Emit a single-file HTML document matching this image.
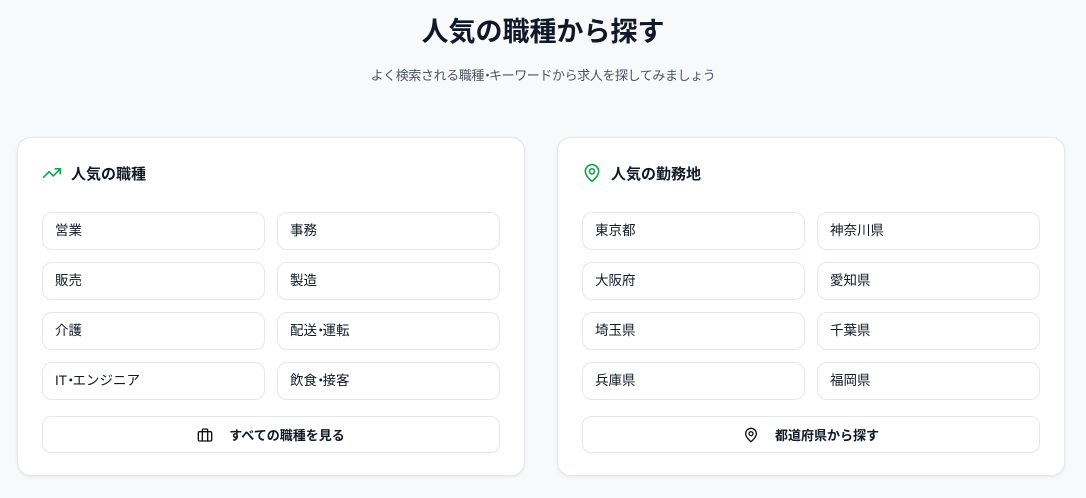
<!DOCTYPE html>
<html><head><meta charset="utf-8"><style>
*{box-sizing:border-box;margin:0;padding:0}
body{width:1086px;height:498px;background:#f8f9fb;font-family:"Liberation Sans","Noto Sans CJK JP",sans-serif;color:#111827;position:relative;overflow:hidden}
h1{position:absolute;top:12px;left:0;width:1086px;text-align:center;font-size:27px;font-weight:700;line-height:40px}
.sub{position:absolute;top:66px;left:0;width:1086px;text-align:center;font-size:13px;letter-spacing:-0.4px;color:#4b5563;line-height:20px}
.card{position:absolute;top:137px;width:508px;height:339px;background:#fff;border:1px solid #e5e7eb;border-radius:14px;box-shadow:0 1px 3px rgba(0,0,0,.08)}
.hd{position:absolute;left:24px;top:24px;height:22px;display:flex;align-items:center;font-size:15px;font-weight:700}
.hd svg{margin-right:9px}
.it{position:absolute;width:223px;height:38px;border:1px solid #e5e7eb;border-radius:10px;font-size:13.5px;line-height:36px;padding-left:12px}
.d{letter-spacing:-5px;margin-left:-3px}
.btn{position:absolute;left:24px;top:278px;width:458px;height:37px;border:1px solid #e5e7eb;border-radius:9px;font-size:13px;font-weight:700;display:flex;align-items:center;justify-content:center}
.btn svg{margin-right:16px}
</style></head><body>
<h1>人気の職種から探す</h1>
<div class="sub">よく検索される職種<span class="d">・</span>キーワードから求人を探してみましょう</div>
<div class="card" style="left:17px">
<div class="hd"><svg width="20" height="20" viewBox="0 0 24 24" fill="none" stroke="#16a34a" stroke-width="2" stroke-linecap="round" stroke-linejoin="round"><polyline points="22 7 13.5 15.5 8.5 10.5 2 17"/><polyline points="16 7 22 7 22 13"/></svg>人気の職種</div>
<div class="it" style="left:24px;top:74px">営業</div><div class="it" style="left:259px;top:74px">事務</div>
<div class="it" style="left:24px;top:124px">販売</div><div class="it" style="left:259px;top:124px">製造</div>
<div class="it" style="left:24px;top:174px">介護</div><div class="it" style="left:259px;top:174px">配送<span class="d">・</span>運転</div>
<div class="it" style="left:24px;top:224px">IT<span class="d">・</span>エンジニア</div><div class="it" style="left:259px;top:224px">飲食<span class="d">・</span>接客</div>
<div class="btn"><svg width="16" height="16" viewBox="0 0 24 24" fill="none" stroke="#111" stroke-width="2" stroke-linecap="round" stroke-linejoin="round"><rect x="2" y="7" width="20" height="14" rx="2"/><path d="M16 21V5a2 2 0 0 0-2-2h-4a2 2 0 0 0-2 2v16"/></svg>すべての職種を見る</div>
</div>
<div class="card" style="left:557px">
<div class="hd"><svg width="20" height="20" viewBox="0 0 24 24" fill="none" stroke="#16a34a" stroke-width="2" stroke-linecap="round" stroke-linejoin="round"><path d="M20 10c0 6-8 12-8 12s-8-6-8-12a8 8 0 0 1 16 0Z"/><circle cx="12" cy="10" r="3"/></svg>人気の勤務地</div>
<div class="it" style="left:24px;top:74px">東京都</div><div class="it" style="left:259px;top:74px">神奈川県</div>
<div class="it" style="left:24px;top:124px">大阪府</div><div class="it" style="left:259px;top:124px">愛知県</div>
<div class="it" style="left:24px;top:174px">埼玉県</div><div class="it" style="left:259px;top:174px">千葉県</div>
<div class="it" style="left:24px;top:224px">兵庫県</div><div class="it" style="left:259px;top:224px">福岡県</div>
<div class="btn"><svg width="16" height="16" viewBox="0 0 24 24" fill="none" stroke="#111" stroke-width="2" stroke-linecap="round" stroke-linejoin="round"><path d="M20 10c0 6-8 12-8 12s-8-6-8-12a8 8 0 0 1 16 0Z"/><circle cx="12" cy="10" r="3"/></svg>都道府県から探す</div>
</div>
</body></html>
